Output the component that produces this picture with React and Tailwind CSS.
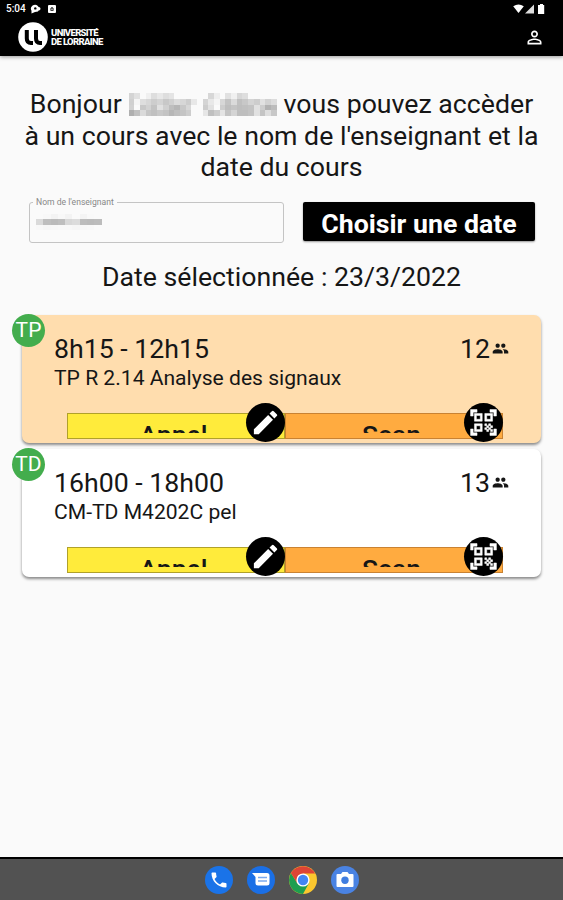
import React from "react";
import { MdPeople, MdEdit, MdQrCodeScanner, MdPermIdentity, MdPhone } from "react-icons/md";

// Gray levels of the anonymised name, one array per mosaic row.
const NAME_ROWS = [
  [212, 225, 250, 240, 222, 232, 222, 228, 250, 250, 250, 250, 250, 250, 215, 238, 250, 225, 240, 215, 222, 250, 250, 250, 250, 250],
  [208, 245, 222, 215, 205, 212, 200, 208, 220, 215, 205, 232, 250, 212, 232, 245, 215, 195, 218, 192, 200, 212, 205, 225, 210, 220],
  [210, 250, 200, 210, 195, 225, 208, 190, 182, 200, 215, 250, 250, 205, 225, 250, 205, 190, 196, 190, 192, 195, 225, 205, 178, 188],
  [175, 192, 218, 198, 192, 200, 195, 182, 190, 196, 205, 250, 250, 230, 192, 205, 228, 196, 212, 190, 190, 195, 225, 196, 222, 200],
];
const FIELD_ROWS = [
  [250, 248, 243, 248, 243, 250, 244, 249],
  [218, 190, 186, 190, 216, 220, 188, 186, 188],
  [248, 246, 247, 248, 248, 246, 247, 248],
];

function Mosaic({ rows, cell }) {
  return (
    <span className="flex flex-col">
      {rows.map((r, i) => (
        <span key={i} className="flex">
          {r.map((g, j) => (
            <span key={j} className={cell} style={{ backgroundColor: `rgb(${g},${g},${g})` }} />
          ))}
        </span>
      ))}
    </span>
  );
}

function StatusBar() {
  return (
    <div className="flex h-[18px] items-center justify-between pl-[6px] pr-[18px] text-white">
      <div className="flex items-center">
        <span className="w-[24px] text-[10px] leading-none font-medium">5:04</span>
        <svg className="h-[10px] w-[11px]" viewBox="0 0 11 10">
          <path d="M1.500 9.500V6.800A4 4 0 1 1 8 7.400L5 8Z" fill="#fff" />
          <circle cx="8.800" cy="4.800" r="1.700" fill="#fff" />
          <circle cx="5.300" cy="4.400" r="1.200" fill="#000" />
        </svg>
        <svg className="ml-[7px] h-[8px] w-[8px]" viewBox="0 0 8 8">
          <rect width="8" height="8" rx="1" fill="#fff" />
          <path d="M2.500 5.800V3.200L4 2l1.500 1.200v2.600Z" fill="#000" />
          <rect x="3.300" y="3.500" width="1.400" height="1.400" fill="#fff" />
        </svg>
      </div>
      <svg className="h-[10px] w-[32px]" viewBox="0 0 32 10">
        <path d="M.2 2.200Q5.500 -1.400 10.800 2.200L5.500 9Z" fill="#fff" />
        <path d="M12 9.500L21 .500V9.500Z" fill="#ddd" />
        <path d="M26 1h1V0h3v1h1.200v9H25V1Z" fill="#fff" />
      </svg>
    </div>
  );
}

function Header() {
  return (
    <header className="h-[56px] bg-black shadow-[0_1px_4px_rgba(0,0,0,0.4)]">
      <StatusBar />
      <div className="flex h-[38px] items-center justify-between pl-[18px] pr-[18px]">
        <div className="flex items-center gap-[3px]">
          <svg className="h-[30px] w-[30px]" viewBox="0 0 30 30">
            <circle cx="15" cy="15" r="14.800" fill="#fff" />
            <path d="M8.800 8V16.500Q8.800 21 13 21H15M18 8V16.500Q18 21 22 21H24" fill="none" stroke="#000" strokeWidth="4" />
          </svg>
          <div className="w-[54px] whitespace-nowrap text-[9.500px] leading-[9px] font-extrabold tracking-[-0.65px] text-white">
            <div>UNIVERSITÉ</div>
            <div>DE LORRAINE</div>
          </div>
        </div>
        <MdPermIdentity className="h-[21px] w-[21px] text-white" />
      </div>
    </header>
  );
}

function Action({ label, color, Icon, stroke }) {
  return (
    <div className="relative">
      <div className={`h-[26px] w-[218px] border ${color}`}>
        <div className="h-[19px] overflow-hidden pr-[5px] text-center text-[26.500px] font-medium">
          <div className="pt-[6px] leading-[30px]">{label}</div>
        </div>
      </div>
      <div className="absolute -top-[10px] left-[179px] flex h-[39px] w-[39px] items-center justify-center rounded-full bg-black text-white">
        <Icon className="h-[31px] w-[31px] [&>[fill=none]]:stroke-none" stroke="white" strokeWidth={stroke} />
      </div>
    </div>
  );
}

function Course({ kind, time, title, count, tone }) {
  return (
    <section className={`relative mx-[22px] h-[128px] rounded-[7px] pl-[32px] pr-[32px] pt-[18px] shadow-[0_2px_3px_rgba(0,0,0,0.45)] ${tone}`}>
      <div className="absolute -left-[10px] -top-px flex h-[33px] w-[33px] items-center justify-center rounded-full bg-[#43ad4d] pt-[2px] text-[21px] text-white">
        {kind}
      </div>
      <div className="flex items-center justify-between text-[26.700px] leading-[32px]">
        <span>{time}</span>
        <span className="flex items-center gap-[2px]">
          {count}
          <MdPeople className="h-[17px] w-[17px]" />
        </span>
      </div>
      <div className="text-[21.100px] leading-[26px]">{title}</div>
      <div className="ml-[13px] mt-[22px] flex">
        <Action label="Appel" color="border-[#b0a12a] bg-[#ffeb3b]" Icon={MdEdit} stroke="0" />
        <Action label="Scan" color="border-[#c98232] bg-[#ffab40]" Icon={MdQrCodeScanner} stroke="0.400" />
      </div>
    </section>
  );
}

function Dock() {
  return (
    <footer className="flex h-[43px] items-center justify-center gap-[14px] border-t-2 border-black bg-[#525252]">
      <span className="flex h-7 w-7 items-center justify-center rounded-full bg-[#1a73e8] text-white">
        <MdPhone className="h-[20px] w-[20px]" />
      </span>
      <span className="flex h-7 w-7 items-center justify-center rounded-full bg-[#1a6fe6]">
        <svg className="h-4 w-[18px]" viewBox="0 0 18 16">
          <path d="M0 1H15Q17.500 1 17.500 3.500V11Q17.500 13.500 15 13.500H6Q3.500 13.500 3.500 11V5Z" fill="#fff" />
          <path d="M6 5.500H15M6 9H15" stroke="#7aa9ee" strokeWidth="1.500" />
        </svg>
      </span>
      <svg className="h-7 w-7" viewBox="0 0 28 28">
        <circle cx="14" cy="14" r="14" fill="#fbc72e" />
        <path d="M14 14L8.400 17.200L1.900 7A14 14 0 0 0 14 28L20 17Z" fill="#1e9e50" />
        <path d="M14 14L8.300 17.300L1.900 7A14 14 0 0 1 26.100 7.500H14Z" fill="#dd4435" />
        <circle cx="14" cy="14" r="6.600" fill="#fff" />
        <circle cx="14" cy="14" r="5.200" fill="#4285f4" />
      </svg>
      <span className="flex h-7 w-7 items-center justify-center rounded-full bg-[#4a83e3]">
        <svg className="h-[18px] w-[18px]" viewBox="0 0 18 18">
          <path d="M1.500 3H5L6.500 1H11.500L13 3H16.500Q17.500 3 17.500 4V15Q17.500 16 16.500 16H1.500Q.5 16 .5 15V4Q.5 3 1.500 3Z" fill="#fff" />
          <circle cx="9" cy="9.300" r="3.700" fill="#3f7de0" />
        </svg>
      </span>
    </footer>
  );
}

export default function App() {
  return (
    <div className="flex h-[900px] w-[563px] flex-col overflow-hidden bg-[#fafafa] font-['Roboto',sans-serif] text-[#161616]">
      <Header />
      <main className="flex-1">
        <h1 className="mt-[33px] text-center text-[26.700px] leading-[31.500px] whitespace-nowrap">
          <div className="flex items-center justify-center gap-[7px]">
            <span>Bonjour</span>
            <Mosaic rows={NAME_ROWS} cell="h-[5.700px] w-[5.690px]" />
            <span>vous pouvez accèder</span>
          </div>
          <div>à un cours avec le nom de l'enseignant et la</div>
          <div>date du cours</div>
        </h1>
        <div className="mt-[18px] flex items-start gap-[19px] pl-[29px]">
          <div className="relative h-[41px] w-[255px] rounded-[3px] border border-[#c4c4c4] pl-[6px] pt-[11px]">
            <span className="absolute -top-[6px] left-[3px] bg-[#fafafa] px-[3px] text-[8.600px] leading-[11px] text-[#888]">
              Nom de l'enseignant
            </span>
            <Mosaic rows={FIELD_ROWS} cell="h-[5.600px] w-[7.300px]" />
          </div>
          <button className="h-[39px] w-[232px] rounded-[2px] bg-black pt-[2px] text-[26.700px] leading-[41px] font-bold text-white shadow-[0_1px_2px_rgba(0,0,0,0.4)]">
            Choisir une date
          </button>
        </div>
        <div className="mt-[18px] mb-[22px] text-center text-[26.700px] leading-[32px]">
          Date sélectionnée : 23/3/2022
        </div>
        <Course kind="TP" time="8h15 - 12h15" title="TP R 2.14 Analyse des signaux" count={12} tone="bg-[#ffddae]" />
        <div className="h-[6px]" />
        <Course kind="TD" time="16h00 - 18h00" title="CM-TD M4202C pel" count={13} tone="bg-white" />
      </main>
      <Dock />
    </div>
  );
}
